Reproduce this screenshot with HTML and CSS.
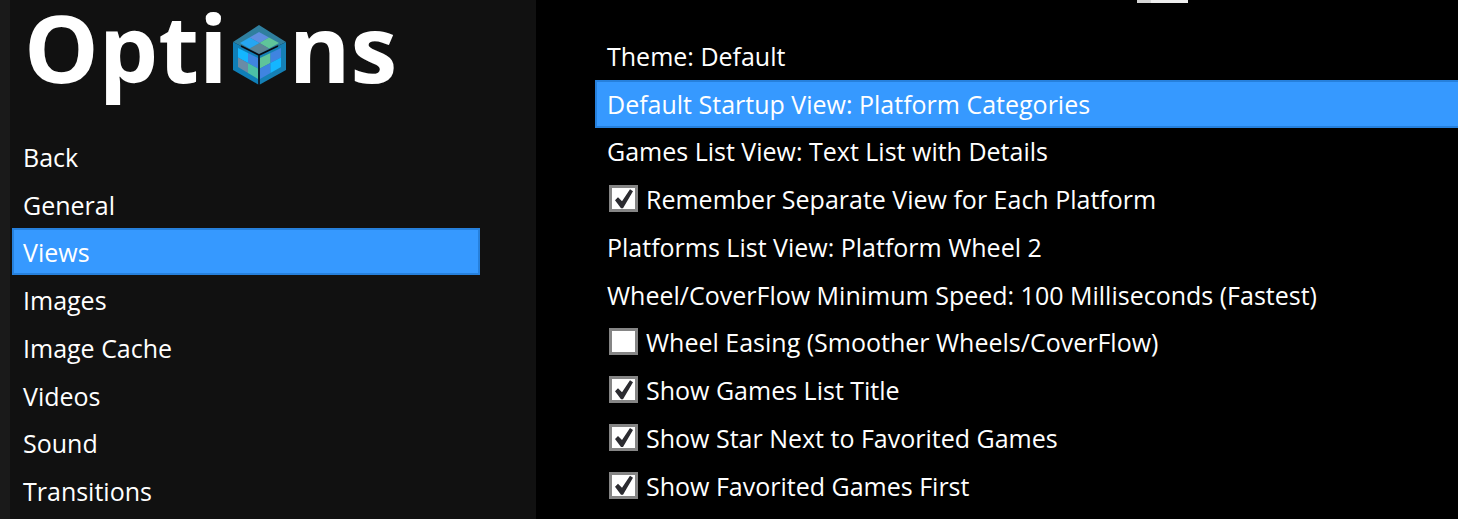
FILE: index.html
```html
<!DOCTYPE html>
<html lang="en">
<head>
  <meta charset="UTF-8" />
  <meta name="viewport" content="width=device-width, initial-scale=1.0" />
  <title>Options</title>
  <link rel="stylesheet" href="styles.css">
</head>
<body>
  <aside class="sidebar">
    <h1 class="logo">
      <span>Opti</span>
      <svg class="cube" viewBox="0 0 53 60" width="53" height="60" aria-hidden="true">
        <polygon points="26,0 53,17 26,30 0,17" fill="#2f7f9f"/>
        <polygon points="0,17 26,30 26,60 0,45" fill="#0f7fb8"/>
        <polygon points="53,17 26,30 26,60 53,45" fill="#1580b5"/>
        <polygon points="26,7 36,12.5 26.5,18 16.5,12.5" fill="#5f8ee0"/>
        <polygon points="36,12.5 46,18 36,23.5 26.5,18" fill="#5fc49a"/>
        <polygon points="26.5,18 36,23.5 26,29 16.5,23.5" fill="#5d8596"/>
        <polygon points="16.5,12.5 26.5,18 16.5,23.5 7,18" fill="#26a6f2"/>
        <polygon points="5,23 15,28 15,38 5,32.5" fill="#14b6ff"/>
        <polygon points="15,28 25,33 25,43.5 15,38" fill="#3f84e0"/>
        <polygon points="5,32.5 15,38 15,48 5,42" fill="#6a8ba6"/>
        <polygon points="15,38 25,43.5 25,54 15,48" fill="#4cbfa6"/>
        <polygon points="27,33 37.5,28 37.5,38 27,43.5" fill="#5fc49a"/>
        <polygon points="37.5,28 48,23 48,32.5 37.5,38" fill="#3f84e0"/>
        <polygon points="27,43.5 37.5,38 37.5,48 27,54" fill="#3f84e0"/>
        <polygon points="37.5,38 48,32.5 48,42 37.5,48" fill="#14b6ff"/>
        <path d="M8 21 26 30 45 21M26 30V60" fill="none" stroke="#0a0a12" stroke-width="1.6"/>
      </svg>
      <span>ns</span>
    </h1>
    <ul class="menu">
      <li>Back</li>
      <li>General</li>
      <li class="selected">Views</li>
      <li>Images</li>
      <li>Image Cache</li>
      <li>Videos</li>
      <li>Sound</li>
      <li>Transitions</li>
    </ul>
  </aside>

  <main class="content">
    <div class="top-strip"><div class="strip-thumb"></div></div>
    <ul class="options">
      <li>Theme: Default</li>
      <li class="selected">Default Startup View: Platform Categories</li>
      <li>Games List View: Text List with Details</li>
      <li><span class="box checked"></span>Remember Separate View for Each Platform</li>
      <li>Platforms List View: Platform Wheel 2</li>
      <li>Wheel/CoverFlow Minimum Speed: 100 Milliseconds (Fastest)</li>
      <li><span class="box"></span>Wheel Easing (Smoother Wheels/CoverFlow)</li>
      <li><span class="box checked"></span>Show Games List Title</li>
      <li><span class="box checked"></span>Show Star Next to Favorited Games</li>
      <li><span class="box checked"></span>Show Favorited Games First</li>
      <li><span class="box"></span></li>
    </ul>
  </main>
</body>
</html>
```

FILE: styles.css
```css
body {
  margin: 0;
  display: flex;
  height: 519px;
  overflow: hidden;
  background: #000;
  color: #fff;
  font-family: 'Open Sans', 'Noto Sans', sans-serif;
  font-size: 25px;
}
ul {
  list-style: none;
  margin: 0;
  padding: 0;
}
.sidebar {
  width: 526px;
  flex-shrink: 0;
  overflow: hidden;
  border-left: 10px solid #1a1a1a;
  background: #111;
}
.logo {
  display: flex;
  height: 132px;
  margin: 0;
  padding-left: 14px;
  box-sizing: border-box;
  font-size: 94px;
  font-weight: 700;
  line-height: 95px;
}
.logo span {
  display: block;
}
.cube {
  margin: 25px 3px 0 5px;
}
.menu {
  width: 468px;
  margin-left: 2px;
}
.menu li {
  display: flex;
  align-items: center;
  height: 47.75px;
  padding: 2px 0 0 11px;
  box-sizing: border-box;
}
.selected {
  background: #3699ff;
  box-shadow: inset 0 0 0 2px #2680dc;
}
.content {
  flex: 1;
  min-width: 0;
  overflow: hidden;
  padding-left: 59px;
}
.top-strip {
  height: 3px;
}
.strip-thumb {
  width: 37px;
  height: 3px;
  margin-left: 542px;
  border-left: 14px solid #d4d4d4;
  background: #eee;
}
.options {
  margin-top: 29px;
}
.options li {
  display: flex;
  align-items: center;
  gap: 8px;
  height: 47.75px;
  padding-left: 12px;
  box-sizing: border-box;
  white-space: nowrap;
}
.options li.selected {
  box-shadow: inset 2px 0 0 #2680dc, inset 0 2px 0 #2680dc, inset 0 -2px 0 #2680dc;
}
.box {
  position: relative;
  flex-shrink: 0;
  width: 29px;
  height: 27px;
  margin: -1px 0 0 2px;
  box-sizing: border-box;
  border: 3px solid #858585;
  background: #fff;
}
.checked::after {
  content: "";
  position: absolute;
  inset: 0;
  background: #2b2b30;
  clip-path: polygon(3px 12px, 6px 9px, 10px 13px, 18px 1px, 21px 3px, 11px 20px, 9px 20px);
}
```
